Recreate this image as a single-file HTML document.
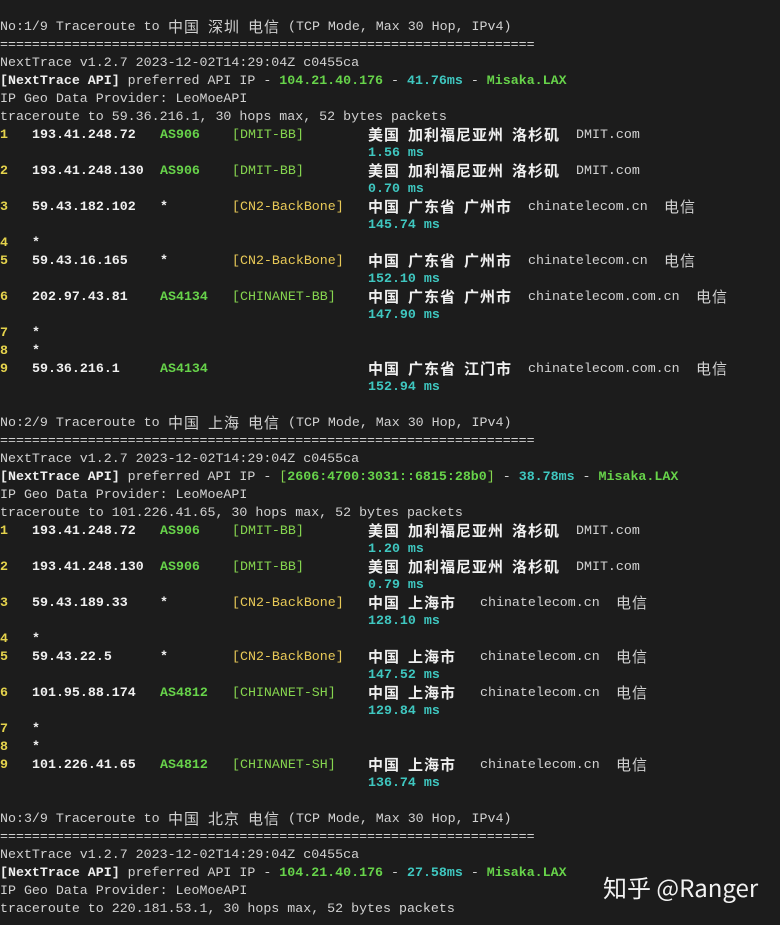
<!DOCTYPE html>
<html><head><meta charset="utf-8"><style>
html,body{margin:0;padding:0;background:#1c1c1c;}
body{width:780px;height:925px;position:relative;overflow:hidden;font-family:"Liberation Mono","Noto Sans CJK SC",monospace;font-size:13.3px;color:#d2d2d2;}
.r{position:absolute;left:0;height:18px;line-height:18px;white-space:pre;width:780px;}
.r span{position:absolute;top:0;}
.r span.i{position:static;}
b{font-weight:bold}
.y{color:#e5d34c;font-weight:bold}
.w{color:#f0f0f0;font-weight:bold}
.g{color:#67d34a;font-weight:bold}
.lg{color:#86d54f}
.yl{color:#e8c957}
.c{color:#3fc7c0;font-weight:bold}
.k{font-family:"Noto Sans CJK SC",sans-serif;font-size:15px;letter-spacing:1px;}
.kb{font-family:"Noto Sans CJK SC",sans-serif;font-size:15px;letter-spacing:1px;font-weight:bold;color:#f0f0f0}
.wm{position:absolute;left:603px;top:869px;font-family:"Noto Sans CJK SC","Liberation Sans",sans-serif;font-size:24px;color:#f2f2f2;}
</style></head><body>

<!-- Section 1 -->
<div class="r" style="top:18px"><span style="left:0">No:1/9 Traceroute to</span><span class="k" style="left:168px">中国</span><span class="k" style="left:208px">深圳</span><span class="k" style="left:248px">电信</span><span style="left:288px">(TCP Mode, Max 30 Hop, IPv4)</span></div>
<div class="r" style="top:36px"><span style="left:0">===================================================================</span></div>
<div class="r" style="top:54px"><span style="left:0">NextTrace v1.2.7 2023-12-02T14:29:04Z c0455ca</span></div>
<div class="r" style="top:72px"><span style="left:0"><b class="w">[NextTrace API]</b> preferred API IP - <b class="g">104.21.40.176</b> - <b class="c">41.76ms</b> - <b class="g">Misaka.LAX</b></span></div>
<div class="r" style="top:90px"><span style="left:0">IP Geo Data Provider: LeoMoeAPI</span></div>
<div class="r" style="top:108px"><span style="left:0">traceroute to 59.36.216.1, 30 hops max, 52 bytes packets</span></div>

<div class="r" style="top:126px"><span class="y" style="left:0">1</span><span class="w" style="left:32px">193.41.248.72</span><span class="g" style="left:160px">AS906</span><span class="lg" style="left:232px">[DMIT-BB]</span><span class="kb" style="left:368px">美国</span><span class="kb" style="left:408px">加利福尼亚州</span><span class="kb" style="left:512px">洛杉矶</span><span style="left:576px">DMIT.com</span></div>
<div class="r" style="top:144px"><span class="c" style="left:368px">1.56 ms</span></div>
<div class="r" style="top:162px"><span class="y" style="left:0">2</span><span class="w" style="left:32px">193.41.248.130</span><span class="g" style="left:160px">AS906</span><span class="lg" style="left:232px">[DMIT-BB]</span><span class="kb" style="left:368px">美国</span><span class="kb" style="left:408px">加利福尼亚州</span><span class="kb" style="left:512px">洛杉矶</span><span style="left:576px">DMIT.com</span></div>
<div class="r" style="top:180px"><span class="c" style="left:368px">0.70 ms</span></div>
<div class="r" style="top:198px"><span class="y" style="left:0">3</span><span class="w" style="left:32px">59.43.182.102</span><span class="w" style="left:160px">*</span><span class="yl" style="left:232px">[CN2-BackBone]</span><span class="kb" style="left:368px">中国</span><span class="kb" style="left:408px">广东省</span><span class="kb" style="left:464px">广州市</span><span style="left:528px">chinatelecom.cn</span><span class="k" style="left:664px">电信</span></div>
<div class="r" style="top:216px"><span class="c" style="left:368px">145.74 ms</span></div>
<div class="r" style="top:234px"><span class="y" style="left:0">4</span><span class="w" style="left:32px">*</span></div>
<div class="r" style="top:252px"><span class="y" style="left:0">5</span><span class="w" style="left:32px">59.43.16.165</span><span class="w" style="left:160px">*</span><span class="yl" style="left:232px">[CN2-BackBone]</span><span class="kb" style="left:368px">中国</span><span class="kb" style="left:408px">广东省</span><span class="kb" style="left:464px">广州市</span><span style="left:528px">chinatelecom.cn</span><span class="k" style="left:664px">电信</span></div>
<div class="r" style="top:270px"><span class="c" style="left:368px">152.10 ms</span></div>
<div class="r" style="top:288px"><span class="y" style="left:0">6</span><span class="w" style="left:32px">202.97.43.81</span><span class="g" style="left:160px">AS4134</span><span class="lg" style="left:232px">[CHINANET-BB]</span><span class="kb" style="left:368px">中国</span><span class="kb" style="left:408px">广东省</span><span class="kb" style="left:464px">广州市</span><span style="left:528px">chinatelecom.com.cn</span><span class="k" style="left:696px">电信</span></div>
<div class="r" style="top:306px"><span class="c" style="left:368px">147.90 ms</span></div>
<div class="r" style="top:324px"><span class="y" style="left:0">7</span><span class="w" style="left:32px">*</span></div>
<div class="r" style="top:342px"><span class="y" style="left:0">8</span><span class="w" style="left:32px">*</span></div>
<div class="r" style="top:360px"><span class="y" style="left:0">9</span><span class="w" style="left:32px">59.36.216.1</span><span class="g" style="left:160px">AS4134</span><span class="kb" style="left:368px">中国</span><span class="kb" style="left:408px">广东省</span><span class="kb" style="left:464px">江门市</span><span style="left:528px">chinatelecom.com.cn</span><span class="k" style="left:696px">电信</span></div>
<div class="r" style="top:378px"><span class="c" style="left:368px">152.94 ms</span></div>

<!-- Section 2 -->
<div class="r" style="top:414px"><span style="left:0">No:2/9 Traceroute to</span><span class="k" style="left:168px">中国</span><span class="k" style="left:208px">上海</span><span class="k" style="left:248px">电信</span><span style="left:288px">(TCP Mode, Max 30 Hop, IPv4)</span></div>
<div class="r" style="top:432px"><span style="left:0">===================================================================</span></div>
<div class="r" style="top:450px"><span style="left:0">NextTrace v1.2.7 2023-12-02T14:29:04Z c0455ca</span></div>
<div class="r" style="top:468px"><span style="left:0"><b class="w">[NextTrace API]</b> preferred API IP - <span class="i lg">[<b class="g">2606:4700:3031::6815:28b0</b>]</span> - <b class="c">38.78ms</b> - <b class="g">Misaka.LAX</b></span></div>
<div class="r" style="top:486px"><span style="left:0">IP Geo Data Provider: LeoMoeAPI</span></div>
<div class="r" style="top:504px"><span style="left:0">traceroute to 101.226.41.65, 30 hops max, 52 bytes packets</span></div>

<div class="r" style="top:522px"><span class="y" style="left:0">1</span><span class="w" style="left:32px">193.41.248.72</span><span class="g" style="left:160px">AS906</span><span class="lg" style="left:232px">[DMIT-BB]</span><span class="kb" style="left:368px">美国</span><span class="kb" style="left:408px">加利福尼亚州</span><span class="kb" style="left:512px">洛杉矶</span><span style="left:576px">DMIT.com</span></div>
<div class="r" style="top:540px"><span class="c" style="left:368px">1.20 ms</span></div>
<div class="r" style="top:558px"><span class="y" style="left:0">2</span><span class="w" style="left:32px">193.41.248.130</span><span class="g" style="left:160px">AS906</span><span class="lg" style="left:232px">[DMIT-BB]</span><span class="kb" style="left:368px">美国</span><span class="kb" style="left:408px">加利福尼亚州</span><span class="kb" style="left:512px">洛杉矶</span><span style="left:576px">DMIT.com</span></div>
<div class="r" style="top:576px"><span class="c" style="left:368px">0.79 ms</span></div>
<div class="r" style="top:594px"><span class="y" style="left:0">3</span><span class="w" style="left:32px">59.43.189.33</span><span class="w" style="left:160px">*</span><span class="yl" style="left:232px">[CN2-BackBone]</span><span class="kb" style="left:368px">中国</span><span class="kb" style="left:408px">上海市</span><span style="left:480px">chinatelecom.cn</span><span class="k" style="left:616px">电信</span></div>
<div class="r" style="top:612px"><span class="c" style="left:368px">128.10 ms</span></div>
<div class="r" style="top:630px"><span class="y" style="left:0">4</span><span class="w" style="left:32px">*</span></div>
<div class="r" style="top:648px"><span class="y" style="left:0">5</span><span class="w" style="left:32px">59.43.22.5</span><span class="w" style="left:160px">*</span><span class="yl" style="left:232px">[CN2-BackBone]</span><span class="kb" style="left:368px">中国</span><span class="kb" style="left:408px">上海市</span><span style="left:480px">chinatelecom.cn</span><span class="k" style="left:616px">电信</span></div>
<div class="r" style="top:666px"><span class="c" style="left:368px">147.52 ms</span></div>
<div class="r" style="top:684px"><span class="y" style="left:0">6</span><span class="w" style="left:32px">101.95.88.174</span><span class="g" style="left:160px">AS4812</span><span class="lg" style="left:232px">[CHINANET-SH]</span><span class="kb" style="left:368px">中国</span><span class="kb" style="left:408px">上海市</span><span style="left:480px">chinatelecom.cn</span><span class="k" style="left:616px">电信</span></div>
<div class="r" style="top:702px"><span class="c" style="left:368px">129.84 ms</span></div>
<div class="r" style="top:720px"><span class="y" style="left:0">7</span><span class="w" style="left:32px">*</span></div>
<div class="r" style="top:738px"><span class="y" style="left:0">8</span><span class="w" style="left:32px">*</span></div>
<div class="r" style="top:756px"><span class="y" style="left:0">9</span><span class="w" style="left:32px">101.226.41.65</span><span class="g" style="left:160px">AS4812</span><span class="lg" style="left:232px">[CHINANET-SH]</span><span class="kb" style="left:368px">中国</span><span class="kb" style="left:408px">上海市</span><span style="left:480px">chinatelecom.cn</span><span class="k" style="left:616px">电信</span></div>
<div class="r" style="top:774px"><span class="c" style="left:368px">136.74 ms</span></div>

<!-- Section 3 -->
<div class="r" style="top:810px"><span style="left:0">No:3/9 Traceroute to</span><span class="k" style="left:168px">中国</span><span class="k" style="left:208px">北京</span><span class="k" style="left:248px">电信</span><span style="left:288px">(TCP Mode, Max 30 Hop, IPv4)</span></div>
<div class="r" style="top:828px"><span style="left:0">===================================================================</span></div>
<div class="r" style="top:846px"><span style="left:0">NextTrace v1.2.7 2023-12-02T14:29:04Z c0455ca</span></div>
<div class="r" style="top:864px"><span style="left:0"><b class="w">[NextTrace API]</b> preferred API IP - <b class="g">104.21.40.176</b> - <b class="c">27.58ms</b> - <b class="g">Misaka.LAX</b></span></div>
<div class="r" style="top:882px"><span style="left:0">IP Geo Data Provider: LeoMoeAPI</span></div>
<div class="r" style="top:900px"><span style="left:0">traceroute to 220.181.53.1, 30 hops max, 52 bytes packets</span></div>

<div class="wm">知乎 @Ranger</div>
</body></html>
